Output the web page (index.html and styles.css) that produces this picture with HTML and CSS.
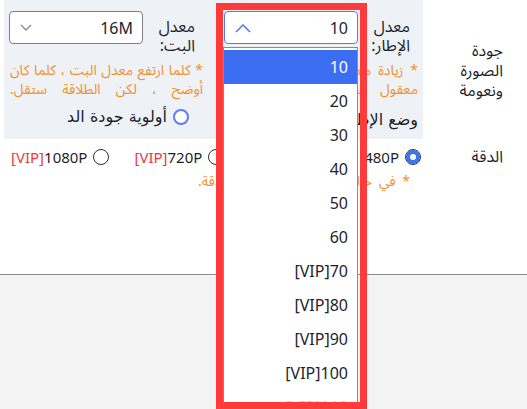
FILE: index.html
```html
<!DOCTYPE html>
<html lang="ar" dir="rtl">
<head>
  <meta charset="UTF-8" />
  <meta name="viewport" content="width=device-width, initial-scale=1.0"/>
  <title>إعدادات البث</title>
  <link rel="stylesheet" href="styles.css">
</head>
<body>
  <div class="settings">
    <!-- Quality row -->
    <div class="row row-quality">
      <div class="row-label">جودة الصورة ونعومة</div>
      <div class="quality-box">
        <div class="field">
          <div class="field-head">
            <label class="field-label">معدل الإطار:</label>
            <div class="select select-open">
              <span class="select-value">10</span>
              <svg class="chev chev-up" width="16" height="10" viewBox="0 0 16 10"><polyline points="1,9 8,2 15,9" /></svg>
              <ul class="select-list">
                <li class="active"><span class="opt">10</span></li>
                <li><span class="opt">20</span></li>
                <li><span class="opt">30</span></li>
                <li><span class="opt">40</span></li>
                <li><span class="opt">50</span></li>
                <li><span class="opt">60</span></li>
                <li><span class="opt">[VIP]70</span></li>
                <li><span class="opt">[VIP]80</span></li>
                <li><span class="opt">[VIP]90</span></li>
                <li><span class="opt">[VIP]100</span></li>
                <li class="faint"><span class="opt">[VIP]110</span></li>
              </ul>
            </div>
          </div>
          <p class="note">* زيادة معدل الإطار تجعل الحركة<br>معقول سيكون أفضل دائما.</p>
          <div class="mode">وضع الإطار</div>
        </div>

        <div class="field">
          <div class="field-head">
            <label class="field-label">معدل البت:</label>
            <div class="select">
              <span class="select-value">16M</span>
              <svg class="chev chev-down" width="12" height="8" viewBox="0 0 12 8"><polyline points="1,1 6,6 11,1" /></svg>
            </div>
          </div>
          <p class="note">* كلما ارتفع معدل البت ، كلما كان<br>أوضح ، لكن الطلاقة ستقل.</p>
          <label class="radio radio-focus"><span class="dot"></span><span class="radio-text">أولوية جودة الد</span></label>
        </div>
      </div>
    </div>

    <!-- Resolution row -->
    <div class="row row-res">
      <div class="row-label">الدقة</div>
      <div class="res-body">
        <div class="res-options">
          <label class="radio checked"><span class="dot"></span><span class="opt">480P</span></label>
          <label class="radio"><span class="dot"></span><span class="opt"><span class="vip">[VIP]</span>540P</span></label>
          <label class="radio"><span class="dot"></span><span class="opt"><span class="vip">[VIP]</span>720P</span></label>
          <label class="radio"><span class="dot"></span><span class="opt"><span class="vip">[VIP]</span>1080P</span></label>
        </div>
        <p class="note">* في حالة ضعف الشبكة قلل الدقة.</p>
      </div>
    </div>
  </div>

  <!-- Highlight frame -->
  <div class="highlight"></div>
</body>
</html>
```

FILE: styles.css
```css
body {
  margin: 0;
  font-family: "Noto Sans", "Noto Sans Arabic", "DejaVu Sans", sans-serif;
  color: #1d1f2c;
  background: #f3f3f4;
  height: 409px;
  overflow: hidden;
  position: relative;
}
.settings {
  background: white;
}
.row {
  display: flex;
}
.row-label {
  width: 56px;
  padding: 0 24px;
  font-size: 16px;
  line-height: 20px;
}
.row-quality .row-label {
  align-self: center;
}
.row-res .row-label {
  padding-top: 7px;
}
.quality-box {
  display: flex;
  width: 419px;
  height: 139px;
  background: #eef1f5;
  box-sizing: border-box;
  padding-top: 11px;
}
.field {
  width: 215px;
  padding-right: 5px;
  box-sizing: border-box;
}
.field:last-child {
  width: 204px;
}
.field-head {
  display: flex;
  gap: 6px;
  margin-right: 8px;
}
.field-label {
  width: 46px;
  font-size: 16px;
  line-height: 19px;
  padding-top: 6px;
}
.select {
  position: relative;
  width: 134px;
  height: 33px;
  box-sizing: border-box;
  border: 1px solid #7b7d8c;
  border-radius: 4px;
  background: white;
  display: flex;
  align-items: center;
  justify-content: space-between;
  padding: 0 9px 0 10px;
  font-size: 16px;
}
.select-open {
  border-color: #4a7ef2;
}
.chev {
  fill: none;
  stroke-width: 1.4;
}
.chev-up {
  stroke: #3f72ee;
}
.chev-down {
  stroke: #8a8c98;
}
.select-list {
  position: absolute;
  top: 35px;
  right: -1px;
  width: 135px;
  margin: 0;
  padding: 2px 0 0;
  list-style: none;
  background: white;
  border: 1px solid #8a8b9a;
  box-sizing: border-box;
  z-index: 2;
}
.select-list li {
  height: 34px;
  line-height: 34px;
  padding-right: 9px;
  font-size: 16px;
}
.select-list li.active {
  background: #3c6ef1;
  color: white;
}
.select-list li.faint {
  color: #c8c8cc;
}
.opt {
  direction: ltr;
  unicode-bidi: isolate;
  display: inline-block;
}
.note {
  width: 193px;
  margin: 5px 0 0;
  font-size: 14px;
  line-height: 19px;
  color: #f0912f;
  white-space: nowrap;
  text-align: justify;
  text-align-last: justify;
}
.mode {
  margin-top: 12px;
  font-family: "DejaVu Sans", sans-serif;
  font-size: 16px;
  line-height: 20px;
}
.radio {
  display: flex;
  align-items: center;
  gap: 6px;
  font-size: 15px;
  line-height: 20px;
}
.field .radio {
  margin-top: 9px;
  padding-right: 14px;
}
.radio-text {
  font-family: "DejaVu Sans", sans-serif;
  font-size: 16px;
}
.dot {
  width: 16px;
  height: 16px;
  border-radius: 50%;
  border: 1px solid #2b2d38;
  box-sizing: border-box;
  background: white;
  flex-shrink: 0;
}
.radio.checked .dot {
  border-color: #23345f;
  box-shadow: inset 0 0 0 4px #3c74f0;
}
.radio-focus .dot {
  border: 2px solid #5b7ff0;
}
.vip {
  color: #f0373c;
}
.row-res {
  height: 136px;
  border-bottom: 1px solid #8b8c9b;
  box-sizing: border-box;
}
.res-body {
  padding-top: 8px;
}
.res-options {
  display: flex;
  gap: 25px;
  margin-right: 2px;
}
.res-body .note {
  width: 212px;
  margin: 5px 13px 0 0;
  line-height: 18px;
}
/* Highlight frame */
.highlight {
  position: absolute;
  left: 216px;
  top: 3px;
  width: 151px;
  height: 406px;
  border: 7px solid #ff3a3a;
  box-sizing: border-box;
  z-index: 3;
}
```
